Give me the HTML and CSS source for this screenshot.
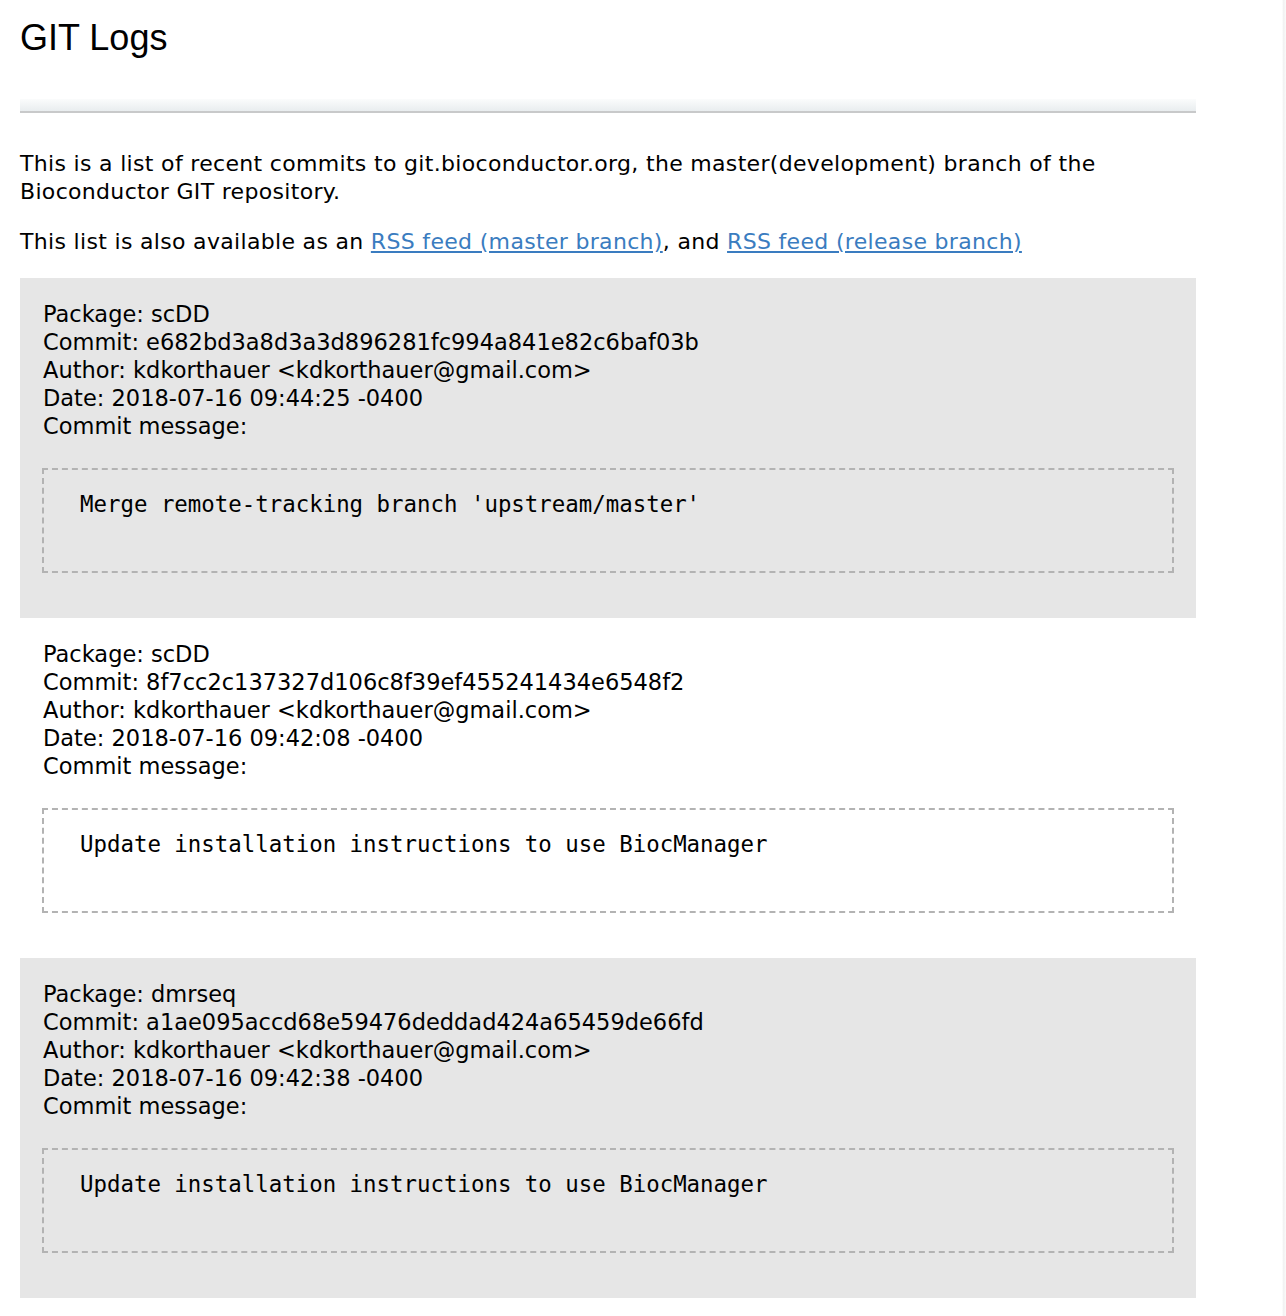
FILE: index.html
```html
<!DOCTYPE html>
<html>
<head>
<meta charset="utf-8">
<title>GIT Logs</title>
<link rel="stylesheet" href="styles.css">
</head>
<body>
<div class="page">
  <h1 class="title">GIT Logs</h1>
  <div class="rule"></div>
  <p class="intro">This is a list of recent commits to git.bioconductor.org, the master(development) branch of the Bioconductor GIT repository.</p>
  <p class="intro">This list is also available as an <a href="#">RSS feed (master branch)</a>, and <a href="#">RSS feed (release branch)</a></p>

  <div class="commit odd">
    <div class="meta">
      <div>Package: scDD</div>
      <div>Commit: e682bd3a8d3a3d896281fc994a841e82c6baf03b</div>
      <div>Author: kdkorthauer &lt;kdkorthauer@gmail.com&gt;</div>
      <div>Date: 2018-07-16 09:44:25 -0400</div>
      <div>Commit message:</div>
    </div>
    <pre class="msg">Merge remote-tracking branch 'upstream/master'</pre>
  </div>

  <div class="commit even">
    <div class="meta">
      <div>Package: scDD</div>
      <div>Commit: 8f7cc2c137327d106c8f39ef455241434e6548f2</div>
      <div>Author: kdkorthauer &lt;kdkorthauer@gmail.com&gt;</div>
      <div>Date: 2018-07-16 09:42:08 -0400</div>
      <div>Commit message:</div>
    </div>
    <pre class="msg">Update installation instructions to use BiocManager</pre>
  </div>

  <div class="commit odd">
    <div class="meta">
      <div>Package: dmrseq</div>
      <div>Commit: a1ae095accd68e59476deddad424a65459de66fd</div>
      <div>Author: kdkorthauer &lt;kdkorthauer@gmail.com&gt;</div>
      <div>Date: 2018-07-16 09:42:38 -0400</div>
      <div>Commit message:</div>
    </div>
    <pre class="msg">Update installation instructions to use BiocManager</pre>
  </div>
</div>
<div class="edge"></div>
</body>
</html>
```
FILE: styles.css
```css
html, body {
  margin: 0;
  padding: 0;
  background: #ffffff;
}
body {
  font-family: "DejaVu Sans", Verdana, sans-serif;
  color: #000;
}
.page {
  width: 1176px;
  margin-left: 20px;
  padding-top: 17px;
  padding-bottom: 18px;
}
.title {
  font-family: "Liberation Sans", Arial, sans-serif;
  font-weight: normal;
  font-size: 36px;
  line-height: 42px;
  margin: 0 0 40px 0;
}
.rule {
  height: 12px;
  background: linear-gradient(to bottom, #fbfcfc 0%, #e9edef 100%);
  border-bottom: 2px solid #c8c9ca;
  margin-bottom: 37px;
}
.intro {
  font-size: 22px;
  letter-spacing: 0.32px;
  line-height: 28px;
  margin: 0 0 22px 0;
}
.intro a {
  color: #3a7cc0;
  text-decoration: underline;
}
.commit {
  padding: 22px 22px 45px 22px;
  font-size: 22.5px;
  line-height: 28px;
}
.commit.odd {
  background: #e6e6e6;
}
.commit.even {
  background: #ffffff;
}
.meta {
  padding-left: 1px;
}
.msg {
  margin: 28px 0 0 0;
  height: 105px;
  box-sizing: border-box;
  border: 2px dashed #b3b3b3;
  padding: 20px 0 0 36px;
  font-family: "DejaVu Sans Mono", Menlo, monospace;
  font-size: 22.4px;
  line-height: 28px;
  white-space: pre;
}
.edge {
  position: fixed;
  top: 0;
  right: 0;
  width: 4px;
  height: 100%;
  background: linear-gradient(to right, #ffffff 0%, #f1f1f1 40%, #fafafa 100%);
}
```
